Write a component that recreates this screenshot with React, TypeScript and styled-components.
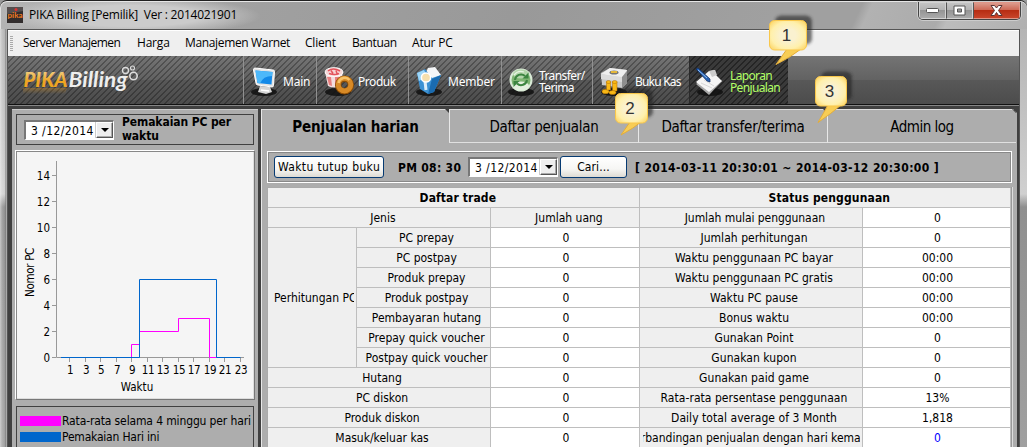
import React from "react";
import styled, { createGlobalStyle, css } from "styled-components";

const tahoma = `"DejaVu Sans Condensed", "DejaVu Sans", sans-serif`;
const segoe = `"Open Sans", "Noto Sans", sans-serif`;
const toolFont = `"Noto Sans", "Open Sans", sans-serif`;

const Global = createGlobalStyle`
  * { box-sizing: border-box; }
  body { margin: 0; overflow: hidden; background: #999; }
`;

const Window = styled.div`
  position: relative;
  width: 1027px;
  height: 447px;
  overflow: hidden;
  display: flex;
  flex-direction: column;
  border-top: 1px solid #202020;
  border-radius: 7px 7px 0 0;
  background: #999;
  font: 12px ${tahoma};
  color: #000;
  white-space: nowrap;
`;

const TitleBar = styled.header`
  height: 28px;
  flex: none;
  display: flex;
  align-items: flex-start;
  padding: 0 6px 0 6px;
  border-top: 1px solid #e6e6e6;
  border-left: 1px solid #e0e0e0;
  border-radius: 7px 7px 0 0;
  background: radial-gradient(ellipse 130px 19px at 130px 14px, #cbcbcb 55%, rgba(203, 203, 203, 0) 100%),
    linear-gradient(115deg, #b4b4b4 0, #a0a0a0 25%, #999 50%, #a0a0a0 75%, #a0a0a0 83%, #b2b2b2 84%, #ababab 91%, #bcbcbc 92%, #b0b0b0 100%);
`;
const AppIcon = styled.svg`
  width: 16px;
  height: 16px;
  margin-top: 5px;
`;
const Title = styled.div`
  flex: 1;
  margin: 4px 0 0 6px;
  font: 12px/18px ${segoe};
  letter-spacing: -0.22px;
  white-space: pre;
`;
const Controls = styled.div`
  display: flex;
  height: 18px;
  border: 1px solid #444;
  border-top: 0;
  border-radius: 0 0 5px 5px;
  overflow: hidden;
  box-shadow: 0 0 0 1px #ccc;
`;
const Control = styled.div<{ $close?: boolean }>`
  width: ${(p) => (p.$close ? 47 : 27)}px;
  display: flex;
  justify-content: center;
  align-items: center;
  border: 1px solid ${(p) => (p.$close ? "#df9688" : "#d2d2d2")};
  background: ${(p) =>
    p.$close
      ? "linear-gradient(#dc9b8d, #cd6a57 45%, #b72d13 50%, #c8442a 100%)"
      : "linear-gradient(#c4c4c4, #b3b3b3 45%, #959595 50%, #aaa)"};
  & + & { border-left-color: #555; }
`;

const Body = styled.div`
  flex: 1;
  min-height: 0;
  display: flex;
  background: linear-gradient(90deg, rgba(255, 255, 255, 0.5) 0, rgba(255, 255, 255, 0.2) 2px, transparent 5px, #777 6px, #ddd 7px, transparent 8px),
    linear-gradient(#b4b4b4, #d0d0d0 165px, #8f8f8f 178px, #a0a0a0);
  padding: 0 7px 0 7px;
`;
const Client = styled.div`
  flex: 1;
  min-width: 0;
  display: flex;
  flex-direction: column;
  border: solid #555;
  border-width: 1px 1px 0 1px;
  background: #404040;
`;
const Menu = styled.nav`
  height: 26px;
  flex: none;
  display: flex;
  align-items: center;
  background: #efefef;
  border-top: 1px solid #fff;
  padding-bottom: 2px;
  font: 12px/16px ${segoe};
`;
const Grip = styled.i`
  width: 3px;
  height: 15px;
  margin: 1px 10px 0 2px;
  background: repeating-linear-gradient(#aaa 0 1px, transparent 1px 2px);
`;
const MenuItem = styled.span<{ $w: number; $ls?: number }>`
  width: ${(p) => p.$w}px;
  letter-spacing: ${(p) => p.$ls ?? -0.2}px;
`;

const Toolbar = styled.div`
  height: 49px;
  flex: none;
  display: flex;
  border-bottom: 1px solid #111;
  background: linear-gradient(#747474, #626262 50%, #585858 51%, #4c4c4c);
`;
const stripes = css`
  background: repeating-linear-gradient(135deg, rgba(0, 0, 0, 0.27) 0 1.2px, transparent 1.2px 4.24px);
`;
const Brand = styled.div`
  width: 235px;
  flex: none;
  ${stripes}
`;
const Tool = styled.div<{ $w: number; $active?: boolean; $gap?: number }>`
  width: ${(p) => p.$w}px;
  flex: none;
  display: flex;
  align-items: center;
  ${stripes}
  ${(p) =>
    p.$active
      ? "background: repeating-linear-gradient(135deg, #252525 0 1.2px, #3a3a3a 1.2px 4.24px); color: #b2ff66;"
      : "color: #fff;"}
  box-shadow: inset 1px 0 ${(p) => (p.$active ? "#2a2a2a" : "#909090")};
  font: 12px/12px ${toolFont};
  padding: 3px 0 0 ${(p) => p.$gap ?? 6}px;
`;
const ToolIcon = styled.svg`
  width: 32px;
  height: 32px;
  flex: none;
  margin-right: 2px;
`;
const ToolText = styled.span<{ $ls?: number; $l?: number }>`
  margin-left: ${(p) => p.$l ?? 0}px;
  letter-spacing: ${(p) => p.$ls ?? -0.2}px;
`;

const Work = styled.main`
  flex: 1;
  min-height: 0;
  display: flex;
  gap: 3px;
  padding: 3px 2px 0 4px;
  border-top: 1px solid #858585;
`;
const Side = styled.aside`
  width: 246px;
  flex: none;
  display: flex;
  flex-direction: column;
  padding: 4px 3px 0;
  background: #adadad;
  border-top: 1px solid #ccc;
`;
const SideHead = styled.div`
  height: 31px;
  flex: none;
  margin: 0 1px;
  display: flex;
  align-items: center;
  padding-left: 7px;
  border: 1px solid #404040;
`;
const SideTitle = styled.b`
  margin: -1px 0 0 8px;
  line-height: 14px;
  letter-spacing: -0.1px;
`;
const DateBox = styled.div`
  width: 90px;
  height: 20px;
  display: flex;
  background: #fff;
  border: solid;
  border-width: 2px 1px 1px 2px;
  border-color: #777 #fff #fff #777;
  padding-left: 5px;
  line-height: 18px;
`;
const DateText = styled.span`
  flex: 1;
  letter-spacing: 0.4px;
`;
const Drop = styled.i`
  width: 17px;
  height: 16px;
  display: flex;
  align-items: center;
  justify-content: center;
  background: #eee;
  border: 1px solid #fff;
  border-right-color: #555;
  border-bottom-color: #555;
  box-shadow: -1px 0 #ccc, inset -1px -1px #aaa;
  &::after {
    content: "";
    border: 4px solid transparent;
    border-top-color: #000;
    border-bottom: 0;
  }
`;
const ChartBox = styled.div`
  height: 250px;
  flex: none;
  margin-top: 5px;
  background: #f5f5f5;
  border: 1px solid;
  border-color: #fff #777 #777 #fff;
  box-shadow: inset 1px 1px #888, inset -1px -1px #ddd;
  svg { display: block; }
  text { font: 11.5px ${tahoma}; }
`;
const Legend = styled.div`
  flex: 1;
  margin: 6px 1px 0;
  border: 1px solid #404040;
  border-bottom: 0;
  padding: 6px 0 0 3px;
`;
const LegendRow = styled.div<{ $ls?: number }>`
  height: 16px;
  display: flex;
  align-items: center;
  line-height: 16px;
  letter-spacing: ${(p) => p.$ls ?? 0}px;
`;
const Swatch = styled.i<{ $c: string }>`
  width: 41px;
  flex: none;
  height: 10px;
  margin-right: 1px;
  background: ${(p) => p.$c};
`;

const Report = styled.section`
  flex: 1;
  min-width: 0;
  background: #adadad;
  border-left: 1px solid #e8e8e8;
  clip-path: polygon(0 0, 752px 0, 756px 4px, 100% 100%, 0 100%);
`;
const Tabs = styled.div`
  display: flex;
  height: 34px;
  font-size: 15px;
`;
const Tab = styled.div<{ $on?: boolean; $ls?: number }>`
  width: ${(p) => (p.$on ? 187 : 189)}px;
  position: relative;
  border-top: 1px solid #ddd;
  text-align: center;
  line-height: 34px;
  letter-spacing: ${(p) => p.$ls ?? -0.25}px;
  ${(p) =>
    p.$on ? "font-weight: bold;" : "border-left: 1px solid #e8e8e8; border-bottom: 1px solid #e0e0e0;"}
  &::after {
    content: "";
    position: absolute;
    right: 0;
    top: -1px;
    border: 2px solid transparent;
    border-top-color: #3c3c3c;
    border-right-color: #3c3c3c;
  }
`;
const Filter = styled.div`
  width: 745px;
  height: 32px;
  margin: 8px 0 4px 5px;
  display: flex;
  align-items: center;
  padding-left: 6px;
  border: 1px solid #fff;
  box-shadow: inset 1px 1px #888, inset -1px -1px #888;
`;
const Button = styled.div<{ $w: number; $l?: number; $ls?: number }>`
  width: ${(p) => p.$w}px;
  height: 22px;
  margin-left: ${(p) => p.$l ?? 0}px;
  border: 1px solid #063a72;
  border-radius: 3px;
  background: linear-gradient(#fff, #f6f6f4 60%, #dedbd3);
  text-align: center;
  line-height: 21px;
  letter-spacing: ${(p) => p.$ls ?? 0}px;
`;
const Strong = styled.b<{ $l?: number; $ls?: number; $w?: number }>`
  margin-left: ${(p) => p.$l ?? 0}px;
  width: ${(p) => (p.$w ? p.$w + "px" : "auto")};
  letter-spacing: ${(p) => p.$ls ?? 0}px;
  padding-top: 2px;
`;
const Grid = styled.div`
  width: 744px;
  margin-left: 5px;
  display: grid;
  grid-template-columns: 89px 134px 149px 223px 148px;
  grid-auto-rows: 20px;
  border-top: 1px solid #aaa;
  border-left: 1px solid #aaa;
  box-shadow: 1px 0 #999, 2px 0 #ddd;
`;
const Cell = styled.div<{ $span?: number; $rows?: number; $plain?: boolean; $head?: boolean; $color?: string; $ls?: number }>`
  grid-column: span ${(p) => p.$span ?? 1};
  grid-row: span ${(p) => p.$rows ?? 1};
  display: flex;
  align-items: center;
  justify-content: center;
  overflow: hidden;
  border: solid #bebebe;
  border-width: 0 1px 1px 0;
  background: ${(p) => (p.$plain ? "#fff" : "#efefef")};
  color: ${(p) => p.$color ?? "#000"};
  font-weight: ${(p) => (p.$head ? "bold" : "normal")};
  letter-spacing: ${(p) => p.$ls ?? 0}px;
  padding: 1px 0 0 ${(p) => (p.$plain ? 2 : 1)}px;
`;
const Clip = styled.span<{ $left?: boolean; $shift?: number }>`
  margin: 0 2px 0 2px;
  padding-left: ${(p) => p.$shift ?? 0}px;
  flex: 1;
  display: flex;
  justify-content: ${(p) => (p.$left ? "flex-start" : "center")};
  overflow: hidden;
`;

const Callout = styled.svg<{ $x: number; $y: number }>`
  position: absolute;
  left: ${(p) => p.$x}px;
  top: ${(p) => p.$y}px;
  overflow: visible;
  text { font: 17px "Liberation Sans", sans-serif; fill: #333; }
`;

type Row = [string, string, string, string?];
const rows: Row[] = [
  ["PC prepay", "Jumlah perhitungan", "0"],
  ["PC postpay", "Waktu penggunaan PC bayar", "00:00"],
  ["Produk prepay", "Waktu penggunaan PC gratis", "00:00"],
  ["Produk postpay", "Waktu PC pause", "00:00"],
  ["Pembayaran hutang", "Bonus waktu", "00:00"],
  ["Prepay quick voucher", "Gunakan Point", "0"],
  ["Postpay quick voucher", "Gunakan kupon", "0"],
  ["Hutang", "Gunakan paid game", "0"],
  ["PC diskon", "Rata-rata persentase penggunaan", "13%"],
  ["Produk diskon", "Daily total average of 3 Month", "1,818"],
  ["Masuk/keluar kas", "Perbandingan penjualan dengan hari kemarin", "0", "#00f"],
];

function DateField() {
  return (
    <DateBox>
      <DateText>3 /12/2014</DateText>
      <Drop />
    </DateBox>
  );
}

function Chart() {
  const x = (t: number) => Math.round(45.3 + t * 7.75) + 0.5;
  const y = (v: number) => 206.5 - v * 13;
  return (
    <ChartBox>
      <svg width="238" height="248">
        <g stroke="#999" fill="none">
          <path d="M40.5 10V206.5H228" />
          {[0, 2, 4, 6, 8, 10, 12, 14].map((v) => (
            <path key={v} d={`M36 ${y(v)}h4`} />
          ))}
          {Array.from({ length: 12 }, (_, i) => (
            <path key={i} d={`M${x(i * 2 + 1)} 207v4`} />
          ))}
        </g>
        {[0, 2, 4, 6, 8, 10, 12, 14].map((v) => (
          <text key={v} x="34" y={y(v) + 4.5} textAnchor="end">{v}</text>
        ))}
        {Array.from({ length: 12 }, (_, i) => (
          <text key={i} x={x(i * 2 + 1) + 0.5} y="223" textAnchor="middle" letterSpacing="-0.4">{i * 2 + 1}</text>
        ))}
        <text x="121" y="240" textAnchor="middle">Waktu</text>
        <text transform="translate(18 121.5) rotate(-90)" textAnchor="middle" letterSpacing="-0.3">Nomor PC</text>
        <path fill="none" stroke="#f0f" d={`M45 ${y(0)}H${x(9)}V${y(1)}H${x(10)}V${y(2)}H${x(15)}V${y(3)}H${x(19)}V${y(0)}H${x(20)}`} />
        <path fill="none" stroke="#06c" d={`M45 ${y(0)}H${x(10)}V${y(6)}H${x(20)}V${y(0)}H${x(23)}`} />
      </svg>
    </ChartBox>
  );
}

function Logo() {
  return (
    <svg width="150" height="48">
      <defs>
        <linearGradient id="gold" x1="0" y1="0" x2="0" y2="1">
          <stop offset="0.2" stopColor="#f0cf85" />
          <stop offset="0.6" stopColor="#eea522" />
        </linearGradient>
        <linearGradient id="fade" x1="0" y1="0" x2="0" y2="1">
          <stop offset="0" stopColor="#f5a21c" stopOpacity="0.3" />
          <stop offset="1" stopColor="#f5a21c" stopOpacity="0" />
        </linearGradient>
      </defs>
      <g fontFamily="Lato, sans-serif" fontWeight="900" fontStyle="italic">
        <text x="15.500" y="30.500" fontSize="21.500" fill="url(#gold)" textLength="44" lengthAdjust="spacingAndGlyphs">PIKA</text>
        <text x="60.500" y="30.500" fontSize="21.500" fontWeight="700" fill="#eee" textLength="59" lengthAdjust="spacingAndGlyphs">Billing</text>
      </g>
      <path d="M15 32h44l-2 6H15z" fill="url(#fade)" />
      <g fill="none" stroke="#ddd">
        <circle cx="117.5" cy="14.5" r="3" strokeWidth="1.3" />
        <circle cx="124.5" cy="12" r="2" strokeWidth="1.1" />
        <circle cx="125.5" cy="20" r="3.7" strokeWidth="1.6" />
      </g>
    </svg>
  );
}

const Shadow = () => <ellipse cx="15" cy="26" rx="13" ry="4" fill="#111" opacity="0.85" />;

const MainIcon = () => (
  <ToolIcon viewBox="0 0 32 32">
    <Shadow />
    <path d="M11 20l10 1 2 5-6 2-8-2z" fill="#d4d4d4" />
    <path d="M6 2l18 2q1.500 0 1.500 1.500l-1 14q0 1.500-1.500 1.500L9 19q-2 0-2-2L4.500 4q0-2 1.500-2z" fill="#e4e4e4" stroke="#fff" />
    <path d="M6.500 4.500l17 1.500-1 12.500-14-1.500z" fill="#1389e8" />
    <path d="M6.500 4.500l17 1.500-.4 4q-9 0-12 7.400l-2.700-.4z" fill="#4db8fa" />
    <path d="M12 24l8 1" stroke="#fff" strokeWidth="1.500" />
  </ToolIcon>
);
const ProductIcon = () => (
  <ToolIcon viewBox="0 0 32 32">
    <Shadow />
    <path d="M2 6h18l-3 14q-6 3-12 0z" fill="#f4dede" />
    <path d="M4 11l2 8 3 1-1-9zM12 11v9l4-1 2-8z" fill="#e88080" />
    <ellipse cx="11" cy="6" rx="9" ry="4.300" fill="#f6d4d4" stroke="#fff" />
    <path d="M5 5q5-4 12 0M6 7.500q6 2 10 0M8 4.500l2 3M13 4.500l1 3" stroke="#e4545c" fill="none" strokeWidth="1.500" />
    <circle cx="21.500" cy="19" r="6.300" fill="none" stroke="#8a4c06" strokeWidth="6.500" />
    <circle cx="21.500" cy="18.600" r="6.300" fill="none" stroke="#d88a26" strokeWidth="5" />
    <path d="M15.500 17a6.300 6.300 0 0 1 11-3" fill="none" stroke="#f7c268" strokeWidth="2.500" />
  </ToolIcon>
);
const MemberIcon = () => (
  <ToolIcon viewBox="0 0 32 32">
    <Shadow />
    <path d="M14 2l7-1 6 8-6 7-10-8z" fill="#f4f6f8" />
    <path d="M3 7l8-4 7 9 9-3-7 17-6 2-8-5z" fill="#3c92d4" />
    <path d="M18 13l9-4-7 17-6 2z" fill="#1a6bb0" />
    <path d="M3 7l7-3 3 6-8 5z" fill="#9dd6f8" />
    <path d="M11 15l1 9" stroke="#dceefa" strokeWidth="3" />
    <circle cx="12" cy="11.500" r="4.600" fill="#f5dfae" stroke="#fff" strokeWidth="1.500" />
  </ToolIcon>
);
const TransferIcon = () => (
  <ToolIcon viewBox="0 0 32 32">
    <Shadow />
    <circle cx="15" cy="14" r="10.500" fill="#7fb673" stroke="#d9ead6" strokeWidth="2" />
    <ellipse cx="15" cy="20" rx="8" ry="4.500" fill="#e3f0de" />
    <ellipse cx="15" cy="8" rx="8" ry="4.500" fill="#b4d5ab" />
    <path d="M9 14a6 6 0 0 1 10-4M21 14a6 6 0 0 1-10 3.500" fill="none" stroke="#3c8540" strokeWidth="2" />
    <path d="M22.500 6.500v6h-6zM7.500 21v-6h6z" fill="#3c8540" />
    <path d="M8 9a9 9 0 0 1 10-3" fill="none" stroke="#e6f4e2" strokeWidth="1.300" />
  </ToolIcon>
);
const CashIcon = () => (
  <ToolIcon viewBox="0 0 32 32">
    <Shadow />
    <path d="M2 7l9-5 17 2v13l-5 5-20-3z" fill="#c9c9c9" />
    <path d="M2 8l9-6 17 2-5 8z" fill="#efefef" />
    <path d="M23 11l5-6v12l-5 5z" fill="#8e8e8e" />
    <path d="M2 8l21 3v5L2 13z" fill="#dcdcdc" />
    <ellipse cx="15" cy="6.500" rx="4.500" ry="2" fill="#777" />
    <path d="M12 6h6" stroke="#e5b83a" strokeWidth="2" />
    <g fill="#f9b816" stroke="#b06d00" strokeWidth="0.500">
      <ellipse cx="6.500" cy="25.500" rx="3.500" ry="2.300" />
      <path d="M7.500 16h4v8h-4zM13.500 16h4.500v9h-4.500z" />
      <ellipse cx="9.500" cy="16" rx="2.300" ry="1.500" />
      <ellipse cx="15.700" cy="16" rx="2.500" ry="1.500" />
      <ellipse cx="13.500" cy="26.500" rx="3.500" ry="2" />
    </g>
  </ToolIcon>
);
const ReportIcon = () => (
  <ToolIcon viewBox="0 0 32 32">
    <Shadow />
    <path d="M1 18L14 8l13 7-13 14z" fill="#aaa" />
    <path d="M1 16L14 5l6-1 1 5 6 6-13 11z" fill="#f5f5f5" />
    <path d="M14 5l6-1 2 5-5 2z" fill="#ccc" />
    <path d="M6 17l11 5M9 14l10 6" stroke="#d8d8d8" />
    <path d="M1 3l2-1 12 11v3l-3-1z" fill="#2863b4" stroke="#0b2a60" strokeWidth="0.700" />
    <path d="M3 4l9 8" stroke="#8fc0f4" />
  </ToolIcon>
);

function Note({ x, y, w, n, tail }: { x: number; y: number; w: number; n: string; tail: string }) {
  return (
    <Callout $x={x} $y={y} width={w} height="31">
      <defs>
        <radialGradient id={`note${n}`} cx="0.5" cy="0.5" r="0.7">
          <stop offset="0.3" stopColor="#faf1d0" />
          <stop offset="0.65" stopColor="#fff0ac" />
          <stop offset="1" stopColor="#fccf55" />
        </radialGradient>
        <filter id={`soft${n}`} x="-30%" y="-30%" width="160%" height="160%">
          <feGaussianBlur stdDeviation="1.6" />
        </filter>
      </defs>
      <rect x="6" y="-4.500" width={w - 1} height="29" rx="6" fill="#222" opacity="0.6" filter={`url(#soft${n})`} />
      <path d={tail} fill="#f8cd55" stroke="#e3ad3b" />
      <rect x="0.500" y="0.500" width={w - 1} height="29.500" rx="5" fill={`url(#note${n})`} stroke="#f9c74b" />
      <text x={w / 2 - 1.5} y="20.500" textAnchor="middle">{n}</text>
    </Callout>
  );
}

export default function App() {
  return (
    <Window>
      <Global />
      <TitleBar>
        <AppIcon viewBox="0 0 16 16">
          <rect width="16" height="16" fill="#322d2d" />
          <path d="M0 0h16v4L0 7z" fill="#554e4e" />
          <text x="0.500" y="10.500" fontSize="8" fontWeight="bold" fontFamily="Lato" fill="#f27a20" textLength="15">pika</text>
          <circle cx="9" cy="2.500" r="1.500" fill="#d33" />
        </AppIcon>
        <Title>{"PIKA Billing [Pemilik]  Ver : 2014021901"}</Title>
        <Controls>
          <Control>
            <svg width="13" height="6"><rect x="0.500" y="0.500" width="12" height="4" rx="1" fill="#fff" stroke="#555" /></svg>
          </Control>
          <Control>
            <svg width="13" height="11"><path fillRule="evenodd" d="M1 1h11v9H1zM4.500 4h4v3h-4z" fill="#fff" stroke="#555" /></svg>
          </Control>
          <Control $close>
            <svg width="13" height="11"><path d="M1 .5h3.500l2 2.500 2-2.500H12L8.500 5.500l3.500 5H8.500l-2-3-2 3H1l3.500-5z" fill="#fff" stroke="#5a3535" /></svg>
          </Control>
        </Controls>
      </TitleBar>
      <Body>
        <Client>
          <Menu>
            <Grip />
            <MenuItem $w={114} $ls={-0.5}>Server Manajemen</MenuItem>
            <MenuItem $w={48}>Harga</MenuItem>
            <MenuItem $w={120} $ls={-0.35}>Manajemen Warnet</MenuItem>
            <MenuItem $w={47}>Client</MenuItem>
            <MenuItem $w={60} $ls={-0.4}>Bantuan</MenuItem>
            <MenuItem $w={60}>Atur PC</MenuItem>
          </Menu>
          <Toolbar>
            <Brand><Logo /></Brand>
            <Tool $w={73}><MainIcon /><ToolText>Main</ToolText></Tool>
            <Tool $w={92} $gap={7}><ProductIcon /><ToolText $l={1} $ls={-0.45}>Produk</ToolText></Tool>
            <Tool $w={93}><MemberIcon /><ToolText $ls={-0.2}>Member</ToolText></Tool>
            <Tool $w={91} $gap={5}><TransferIcon /><ToolText $l={-1} $ls={-0.6}>Transfer/<br />Terima</ToolText></Tool>
            <Tool $w={97} $gap={7}><CashIcon /><ToolText $l={2} $ls={-0.8}>Buku Kas</ToolText></Tool>
            <Tool $w={99} $active><ReportIcon /><ToolText $l={1} $ls={-0.65}>Laporan<br />Penjualan</ToolText></Tool>
          </Toolbar>
          <Work>
            <Side>
              <SideHead>
                <DateField />
                <SideTitle>Pemakaian PC per<br />waktu</SideTitle>
              </SideHead>
              <Chart />
              <Legend>
                <LegendRow $ls={-0.13}><Swatch $c="#f0f" />Rata-rata selama 4 minggu per hari</LegendRow>
                <LegendRow $ls={-0.2}><Swatch $c="#06c" />Pemakaian Hari ini</LegendRow>
              </Legend>
            </Side>
            <Report>
              <Tabs>
                <Tab $on $ls={-0.15}>Penjualan harian</Tab>
                <Tab>Daftar penjualan</Tab>
                <Tab>Daftar transfer/terima</Tab>
                <Tab $ls={-0.5}>Admin log</Tab>
              </Tabs>
              <Filter>
                <Button $w={110} $ls={0.38}>Waktu tutup buku</Button>
                <Strong $l={14} $w={70} $ls={0.3}>PM 08: 30</Strong>
                <DateField />
                <Button $w={67} $l={2} $ls={0.1}>Cari...</Button>
                <Strong $l={8} $ls={0.38}>[ 2014-03-11 20:30:01 ~ 2014-03-12 20:30:00 ]</Strong>
              </Filter>
              <Grid>
                <Cell $span={3} $head $ls={0.1}>&nbsp;&nbsp;Daftar trade</Cell>
                <Cell $span={2} $head $ls={0.15}>&nbsp;&nbsp;Status penggunaan</Cell>
                <Cell $span={2}>&nbsp;&nbsp;Jenis</Cell>
                <Cell>&nbsp;&nbsp;Jumlah uang</Cell>
                <Cell $ls={-0.06}>&nbsp;&nbsp;Jumlah mulai penggunaan</Cell>
                <Cell $plain>0</Cell>
                {rows.map(([left, right, value, color], i) => (
                  <React.Fragment key={left}>
                    {i === 0 && <Cell $rows={7}><Clip $left $shift={3}>Perhitungan PC</Clip></Cell>}
                    <Cell $span={i > 6 ? 2 : 1}><Clip $shift={5}>{left}</Clip></Cell>
                    <Cell $plain>0</Cell>
                    <Cell $ls={i === 10 ? 0 : 0.05}><Clip $shift={i === 10 ? 0 : 5}>{right}</Clip></Cell>
                    <Cell $plain $color={color}>{value}</Cell>
                  </React.Fragment>
                ))}
              </Grid>
            </Report>
          </Work>
        </Client>
      </Body>
      <Note x={769} y={19} w={38} n="1" tail="M18 29L7 44.500Q22 37 32 29z" />
      <Note x={615} y={92} w={33} n="2" tail="M15 29L6 42Q19 35 26 29z" />
      <Note x={815} y={75} w={32} n="3" tail="M13 29L3 46.500Q17 37 26 29z" />
    </Window>
  );
}
